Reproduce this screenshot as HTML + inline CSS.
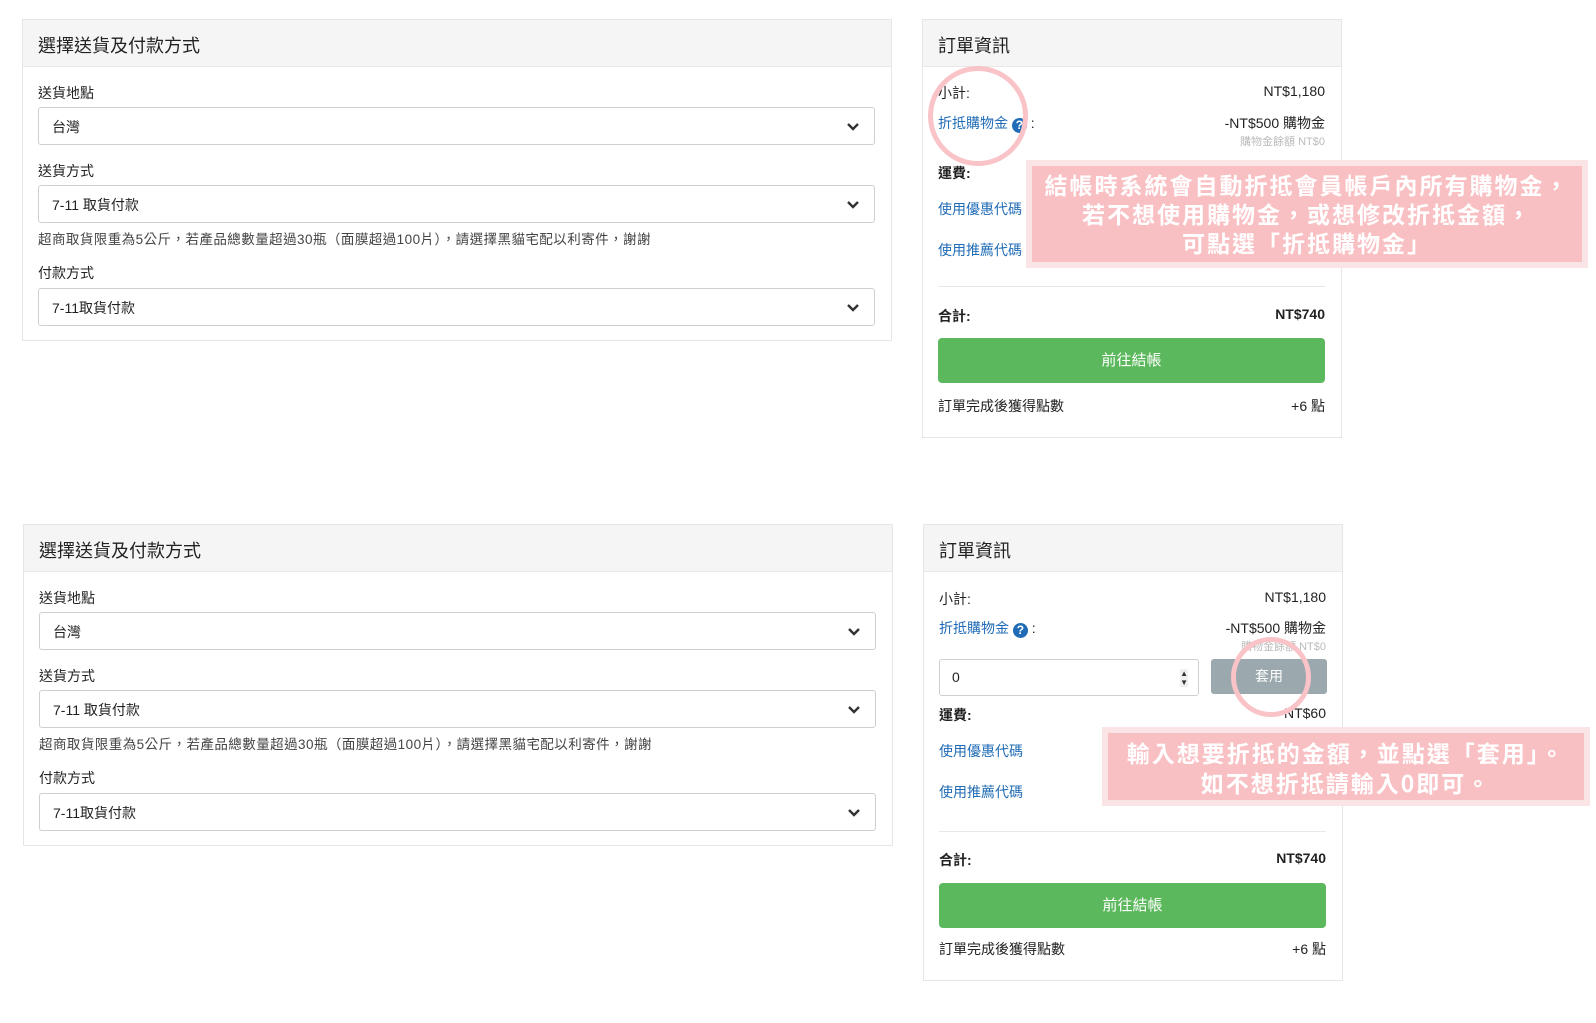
<!DOCTYPE html>
<html><head><meta charset="utf-8"><style>
*{box-sizing:border-box;margin:0;padding:0}
body{width:1596px;height:1023px;background:#fff;position:relative;overflow:hidden;font-family:"Liberation Sans","Noto Sans CJK TC",sans-serif;color:#222;font-size:14px}
.panel{position:absolute;border:1px solid #e6e6e6;background:#fff}
.hd{position:absolute;left:0;right:0;top:0;height:47px;background:#f5f5f5;border-bottom:1px solid #e8e8e8}
.hd span{position:absolute;left:15px;top:12px;font-size:18px;color:#222}
.sel{position:absolute;left:15px;right:16px;height:38px;border:1px solid #cfcfcf;border-radius:3px;background:#fff}
.sel span{position:absolute;left:13px;top:9px;font-size:14px}
.sel svg{position:absolute;right:14px;top:14px}
.lbl{position:absolute;left:15px;font-size:14px}
.note{position:absolute;left:15px;font-size:13.5px;color:#444;letter-spacing:0.45px;white-space:nowrap}
.blue{color:#1f6bb5}
.r{position:absolute;right:16px;text-align:right;white-space:nowrap}
.l{position:absolute;left:15px;white-space:nowrap}
.hr{position:absolute;left:15px;right:16px;height:1px;background:#e8e8e8}
.btn{position:absolute;left:15px;right:16px;height:45px;background:#5cb85c;border-radius:4px;color:#fff;text-align:center;line-height:45px;font-size:15px}
.q{display:inline-block;width:15px;height:15px;border-radius:50%;background:#1f6bb5;color:#fff;font-size:12px;line-height:15px;text-align:center;font-weight:bold;vertical-align:-1px}
.pink{position:absolute;background:#f9c0c4;border:6px solid #fbe4e6;color:#fff;text-align:center;font-size:23px;letter-spacing:2px;font-weight:bold;font-family:"Noto Sans CJK TC","Liberation Sans",sans-serif}
.circ{position:absolute;border:5px solid #f9c3c7;border-radius:50%}
</style></head><body>

<div class="panel" style="left:22px;top:19px;width:870px;height:322px">
 <div class="hd"><span>選擇送貨及付款方式</span></div>
 <div class="lbl" style="top:63px">送貨地點</div>
 <div class="sel" style="top:87px"><span>台灣</span><svg width="14" height="9" viewBox="0 0 14 9"><path d="M2 2l5 5 5-5" fill="none" stroke="#333" stroke-width="2.4"/></svg></div>
 <div class="lbl" style="top:141px">送貨方式</div>
 <div class="sel" style="top:165px"><span>7-11 取貨付款</span><svg width="14" height="9" viewBox="0 0 14 9"><path d="M2 2l5 5 5-5" fill="none" stroke="#333" stroke-width="2.4"/></svg></div>
 <div class="note" style="top:208px">超商取貨限重為5公斤，若產品總數量超過30瓶（面膜超過100片），請選擇黑貓宅配以利寄件，謝謝</div>
 <div class="lbl" style="top:243px">付款方式</div>
 <div class="sel" style="top:268px"><span>7-11取貨付款</span><svg width="14" height="9" viewBox="0 0 14 9"><path d="M2 2l5 5 5-5" fill="none" stroke="#333" stroke-width="2.4"/></svg></div>
</div>

<div class="panel" style="left:23px;top:524px;width:870px;height:322px">
 <div class="hd"><span>選擇送貨及付款方式</span></div>
 <div class="lbl" style="top:63px">送貨地點</div>
 <div class="sel" style="top:87px"><span>台灣</span><svg width="14" height="9" viewBox="0 0 14 9"><path d="M2 2l5 5 5-5" fill="none" stroke="#333" stroke-width="2.4"/></svg></div>
 <div class="lbl" style="top:141px">送貨方式</div>
 <div class="sel" style="top:165px"><span>7-11 取貨付款</span><svg width="14" height="9" viewBox="0 0 14 9"><path d="M2 2l5 5 5-5" fill="none" stroke="#333" stroke-width="2.4"/></svg></div>
 <div class="note" style="top:208px">超商取貨限重為5公斤，若產品總數量超過30瓶（面膜超過100片），請選擇黑貓宅配以利寄件，謝謝</div>
 <div class="lbl" style="top:243px">付款方式</div>
 <div class="sel" style="top:268px"><span>7-11取貨付款</span><svg width="14" height="9" viewBox="0 0 14 9"><path d="M2 2l5 5 5-5" fill="none" stroke="#333" stroke-width="2.4"/></svg></div>
</div>

<div class="panel" style="left:922px;top:19px;width:420px;height:419px">
 <div class="hd"><span>訂單資訊</span></div>
 <div class="l" style="top:63px">小計:</div><div class="r" style="top:63px">NT$1,180</div>
 <div class="l blue" style="top:93px">折抵購物金 <span class="q">?</span><span style="color:#222"> :</span></div><div class="r" style="top:93px">-NT$500 購物金</div>
 <div class="r" style="top:113px;font-size:11px;color:#bbb">購物金餘額 NT$0</div>
 <div class="l" style="top:143px;font-weight:bold">運費:</div>
 <div class="l blue" style="top:179px">使用優惠代碼</div>
 <div class="l blue" style="top:220px">使用推薦代碼</div>
 <div class="hr" style="top:266px"></div>
 <div class="l" style="top:286px;font-weight:bold">合計:</div><div class="r" style="top:286px;font-weight:bold">NT$740</div>
 <div class="btn" style="top:318px">前往結帳</div>
 <div class="l" style="top:376px">訂單完成後獲得點數</div><div class="r" style="top:376px">+6 點</div>
</div>
<div class="circ" style="left:928px;top:66px;width:100px;height:100px"></div>
<div class="pink" style="left:1026px;top:160px;width:562px;height:108px;line-height:29px;padding-top:4px">結帳時系統會自動折抵會員帳戶內所有購物金，<br>若不想使用購物金，或想修改折抵金額，<br>可點選「折抵購物金」</div>

<div class="panel" style="left:923px;top:524px;width:420px;height:457px">
 <div class="hd"><span>訂單資訊</span></div>
 <div class="l" style="top:64px">小計:</div><div class="r" style="top:64px">NT$1,180</div>
 <div class="l blue" style="top:93px">折抵購物金 <span class="q">?</span><span style="color:#222"> :</span></div><div class="r" style="top:93px">-NT$500 購物金</div>
 <div class="r" style="top:113px;font-size:11px;color:#bbb">購物金餘額 NT$0</div>
 <div style="position:absolute;left:15px;top:134px;width:260px;height:37px;border:1px solid #cfcfcf;border-radius:3px"><span style="position:absolute;left:12px;top:9px">0</span><span style="position:absolute;right:10px;top:9px;font-size:8px;line-height:9px;color:#333;background:#f0f0f0">▲<br>▼</span></div>
 <div style="position:absolute;left:287px;top:134px;width:116px;height:35px;background:#9ba9ae;border-radius:3px;color:#fff;text-align:center;line-height:35px">套用</div>
 <div class="l" style="top:180px;font-weight:bold">運費:</div><div class="r" style="top:180px">NT$60</div>
 <div class="l blue" style="top:216px">使用優惠代碼</div>
 <div class="l blue" style="top:257px">使用推薦代碼</div>
 <div class="hr" style="top:306px"></div>
 <div class="l" style="top:325px;font-weight:bold">合計:</div><div class="r" style="top:325px;font-weight:bold">NT$740</div>
 <div class="btn" style="top:358px">前往結帳</div>
 <div class="l" style="top:414px">訂單完成後獲得點數</div><div class="r" style="top:414px">+6 點</div>
</div>
<div class="circ" style="left:1231px;top:637px;width:80px;height:80px"></div>
<div class="pink" style="left:1102px;top:727px;width:488px;height:79px;line-height:30px;padding-top:4px">輸入想要折抵的金額，並點選「套用」。<br>如不想折抵請輸入0即可。</div>

</body></html>
